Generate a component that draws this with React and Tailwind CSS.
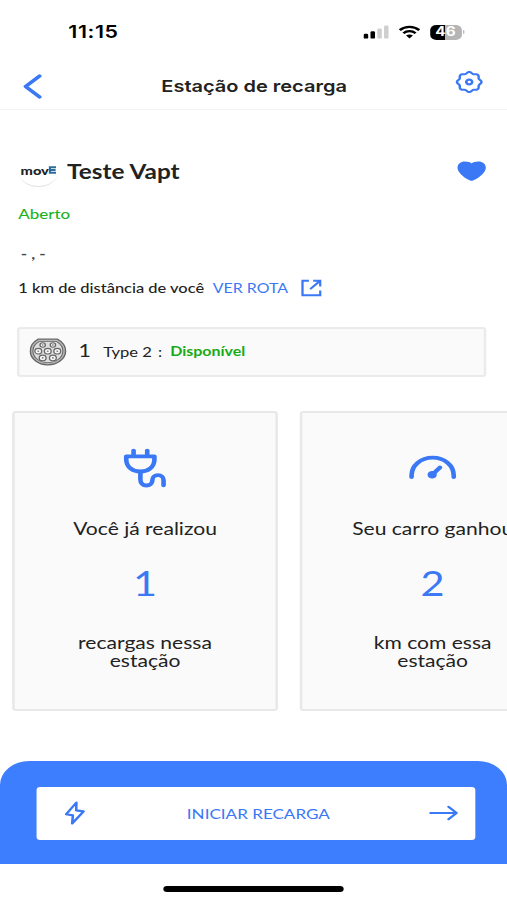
import React from "react";

const BLUE = "#3a78f5";

const cards = [
  { id: 1, icon: "plug", title: "Você já realizou", value: "1", lines: ["recargas nessa", "estação"] },
  { id: 2, icon: "gauge", title: "Seu carro ganhou", value: "2", lines: ["km com essa", "estação"] },
];

// Wavy outline with 8 bumps
const gearPath = () => {
  const points = [];
  for (let i = 0; i < 96; i++) {
    const a = (i / 96) * Math.PI * 2;
    const r = 9.3 + 0.75 * Math.cos(8 * a);
    points.push(`${(12 + r * Math.cos(a)).toFixed(2)} ${(12 + r * Math.sin(a)).toFixed(2)}`);
  }
  return `M${points.join("L")}Z`;
};

const GearIcon = () => (
  <svg width="24" height="24" viewBox="0 0 24 24" fill="none" stroke={BLUE} strokeWidth="2" strokeLinejoin="round">
    <path d={gearPath()} />
    <circle cx="12" cy="12" r="2.4" strokeWidth="2.2" />
  </svg>
);

const SignalIcon = () => (
  <svg width="22" height="14" viewBox="0 0 22 14">
    <rect x="0.4" y="8.8" width="3.7" height="4.8" rx="1.2" fill="#000" />
    <rect x="6" y="6.3" width="3.7" height="7.3" rx="1.2" fill="#000" />
    <rect x="11.6" y="3.5" width="3.7" height="10.1" rx="1.2" fill="#cfcfcf" />
    <rect x="17.1" y="0.6" width="3.7" height="13" rx="1.2" fill="#cfcfcf" />
  </svg>
);

const WifiIcon = () => (
  <svg width="18" height="14" viewBox="0 0 18 14" fill="none" stroke="#000" strokeWidth="2.3">
    <path d="M1 5.1C5.5 0.7 12.5 0.7 17 5.1" />
    <path d="M4 8.3C6.8 5.5 11.2 5.5 14 8.3" />
    <path d="M9 13.4L6.2 10.6C7.8 9.2 10.2 9.2 11.8 10.6Z" fill="#000" stroke="none" />
  </svg>
);

const PlugIcon = () => (
  <svg width="36" height="40" viewBox="0 0 36 40" fill="none" stroke={BLUE} strokeWidth="3.8" strokeLinecap="round" strokeLinejoin="round">
    <path d="M8.6 2.6V8M19.8 2.6V8" />
    <path d="M2.6 8.3H25.7V11.5C25.7 19 20.5 23.5 14.2 23.5C7.8 23.5 2.6 19 2.6 11.5Z" />
    <path d="M14.2 23.8V31.5C14.2 35.4 16.4 37.5 19.1 37.5C21.8 37.5 24 35.4 24 32.3C24 29.2 26 27.2 28.6 27.2C31.2 27.2 33.2 29.2 33.2 32.3V37.3" />
  </svg>
);

const GaugeIcon = () => (
  <svg width="40" height="26" viewBox="0 0 40 26" fill="none" stroke={BLUE} strokeWidth="3.8" strokeLinecap="round">
    <path d="M2.7 22V20.5C2.7 10.5 10.2 2.7 20 2.7C29.8 2.7 37.3 10.5 37.3 20.5V22" />
    <path d="M20 19.3L26 12.4" />
    <circle cx="19.6" cy="19.7" r="3.8" fill={BLUE} stroke="none" />
  </svg>
);

const Type2Icon = () => {
  const pins = [
    [11, 7, 2.2],
    [19.4, 7, 2.2],
    [7.4, 13.2, 2.8],
    [15.2, 13.2, 2.8],
    [23, 13.2, 2.8],
    [11, 19.9, 2.8],
    [19.4, 19.9, 2.8],
  ];
  return (
    <svg width="31" height="28" viewBox="0 0 31 28" fill="none" stroke="#666">
      <path d="M7.2 1.2H23.3C27.5 4 29.8 8.3 29.8 13C29.8 20.7 23.2 26.8 15.2 26.8C7.2 26.8 0.9 20.7 0.9 13C0.9 8.3 3 4 7.2 1.2Z" strokeWidth="1.2" fill="#b9b9b9" />
      <path d="M8 3.6H22.5C25.8 5.9 27.6 9.2 27.6 13C27.6 19.5 22.1 24.6 15.2 24.6C8.4 24.6 3 19.5 3 13C3 9.2 4.7 5.9 8 3.6Z" strokeWidth="0.9" fill="#dedede" />
      {pins.map(([x, y, r]) => (
        <g key={`${x}-${y}`}>
          <circle cx={x} cy={y} r={r} strokeWidth="1.1" fill="#f6f6f6" />
          <circle cx={x} cy={y} r="0.8" fill="#777" stroke="none" />
        </g>
      ))}
    </svg>
  );
};

const StatCard = ({ card }) => (
  <div className="flex h-[300px] w-[218px] shrink-0 flex-col items-center rounded-[3px] border-2 border-[#e8e8e8] bg-[#fafafa]">
    <div className="mt-[34px] flex h-[42px] items-center">
      {card.icon === "plug" ? <PlugIcon /> : <GaugeIcon />}
    </div>
    <div className="mt-[28px] text-[17.3px] leading-[24px] whitespace-nowrap">{card.title}</div>
    <div className="mt-[20px] text-[34px] leading-[44px]" style={{ color: BLUE }}>
      {card.value}
    </div>
    <div className="mt-[29px] text-center text-[17.3px] leading-[17.5px]">
      {card.lines.map((line) => (
        <div key={line}>{line}</div>
      ))}
    </div>
  </div>
);

const App = () => {
  return (
    <div className="h-[900px] w-[507px] overflow-hidden bg-white">
      <div className="flex h-[900px] w-[416px] origin-top-left scale-x-[1.21875] flex-col font-['Lato',sans-serif] text-[#222]">
        {/* Status bar */}
        <div className="flex h-[62px] shrink-0 items-center pt-[2px] pr-[35px] pl-[56px] font-['Inter',sans-serif]">
          <span className="text-[17.5px] font-semibold tracking-[0.5px] text-black">11:15</span>
          <div className="ml-auto flex items-center">
            <SignalIcon />
            <div className="ml-[7px]">
              <WifiIcon />
            </div>
            <div className="ml-[8px] flex h-[15px] w-[26px] items-center justify-center rounded-[5px] bg-linear-to-r from-black from-48% to-[#b5b5b5] to-48% text-[12.5px] font-bold text-white">
              46
            </div>
            <div className="ml-px h-[4px] w-[1.5px] rounded-r-full bg-[#b5b5b5]" />
          </div>
        </div>

        {/* Header */}
        <div className="flex h-[48px] shrink-0 items-center justify-between border-b border-[#f4f4f4] pr-[19px] pl-[18px]">
          <svg width="18" height="26" viewBox="0 0 18 26" fill="none" stroke={BLUE} strokeWidth="3.2" strokeLinecap="round" strokeLinejoin="round">
            <path d="M14.5 3L3 13.5L14.5 24" />
          </svg>
          <h1 className="pt-px pl-[8px] font-['Inter',sans-serif] text-[16.4px] leading-[24px] font-semibold">
            Estação de recarga
          </h1>
          <div className="-mt-[8px]">
            <GearIcon />
          </div>
        </div>

        {/* Station info */}
        <div className="flex h-[217px] shrink-0 flex-col pr-[17px] pl-[15px]">
          <div className="mt-[42px] flex h-[38px] items-center">
            <div className="flex h-[32px] w-[33px] items-center justify-center rounded-full border-b border-[#e4e4e4] whitespace-nowrap">
              <span className="text-[12px] leading-none font-black">mov</span>
              <svg className="-mt-px" width="6" height="8" viewBox="0 0 6 8" fill="none" stroke="#2b6c9c" strokeWidth="2.1">
                <path d="M6 1.2H0.8V6.8H6M0.8 4H5.6" />
              </svg>
            </div>
            <h2 className="ml-[7px] -mt-px text-[20px] font-bold">Teste Vapt</h2>
            <svg className="-mt-px ml-auto" width="24" height="20" viewBox="0 0 24 20" fill={BLUE}>
              <path d="M12 19.8C9.5 19.8 0.4 12.8 0.4 6.8C0.4 3 3 0.6 6.4 0.6C9 0.6 10.8 1.3 12 2.4C13.2 1.3 15 0.6 17.6 0.6C21 0.6 23.6 3 23.6 6.8C23.6 12.8 14.5 19.8 12 19.8Z" />
            </svg>
          </div>
          <div className="mt-[14px] text-[13.9px] leading-[20px] font-medium text-[#1fb31f]">Aberto</div>
          <div className="mt-[20px] pl-[2px] text-[14px] leading-[20px] font-bold text-[#444]">- , -</div>
          <div className="mt-[14px] flex h-[20px] items-center text-[13.5px] leading-[20px] whitespace-nowrap">
            <span className="font-medium">1 km de distância de você</span>
            <span className="ml-[7px] text-[13.1px]" style={{ color: BLUE }}>
              VER ROTA
            </span>
            <svg className="ml-[11px]" width="17" height="18" viewBox="0 0 17 18" fill="none" stroke={BLUE} strokeWidth="1.9">
              <path d="M6.5 1.8H1.2V16.2H15.8V11.5M10 1.8H15.8V7.5M15.5 2L7.5 10.2" />
            </svg>
          </div>
        </div>

        {/* Connector */}
        <div className="mr-[17px] ml-[14px] flex h-[50px] shrink-0 items-center rounded-[3px] border-2 border-[#ebebeb] bg-[#fafafa] pl-[7.5px]">
          <Type2Icon />
          <span className="-mt-px ml-[10px] text-[17.5px]">1</span>
          <span className="ml-[10px] text-[13.6px]">Type 2</span>
          <span className="ml-[5px] text-[13.6px]">:</span>
          <span className="ml-[6.5px] text-[13.1px] font-bold text-[#16ab16]">Disponível</span>
        </div>

        {/* Stats */}
        <div className="mt-[34px] flex shrink-0 gap-[18px] overflow-hidden pl-[10px]">
          {cards.map((card) => (
            <StatCard key={card.id} card={card} />
          ))}
        </div>

        {/* Start button */}
        <div className="mt-[50px] flex h-[103px] shrink-0 rounded-t-[24px] bg-[#3d7eff] pt-[26px] pr-[26.5px] pl-[29.5px]">
          <button className="flex h-[53px] w-full items-center justify-between rounded-[3px] bg-white pr-[14px] pb-px pl-[23px]">
            <svg width="17" height="24" viewBox="0 0 17 24" fill="none" stroke={BLUE} strokeWidth="2.1" strokeLinejoin="round">
              <path d="M9.7 1.5L1.2 13.3L6.8 14.4L6.2 22.5L15.6 10.4L9.5 9.4Z" />
            </svg>
            <span className="pl-[3px] text-[14px]" style={{ color: BLUE }}>
              INICIAR RECARGA
            </span>
            <svg width="24" height="16" viewBox="0 0 24 16" fill="none" stroke={BLUE} strokeWidth="2.1" strokeLinecap="round" strokeLinejoin="round">
              <path d="M1.2 8H22.5M16 1.8L22.6 8L16 14.2" />
            </svg>
          </button>
        </div>

        {/* Home indicator */}
        <div className="mx-auto mt-[22px] h-[6px] w-[148px] rounded-full bg-black" />
      </div>
    </div>
  );
};

export default App;
